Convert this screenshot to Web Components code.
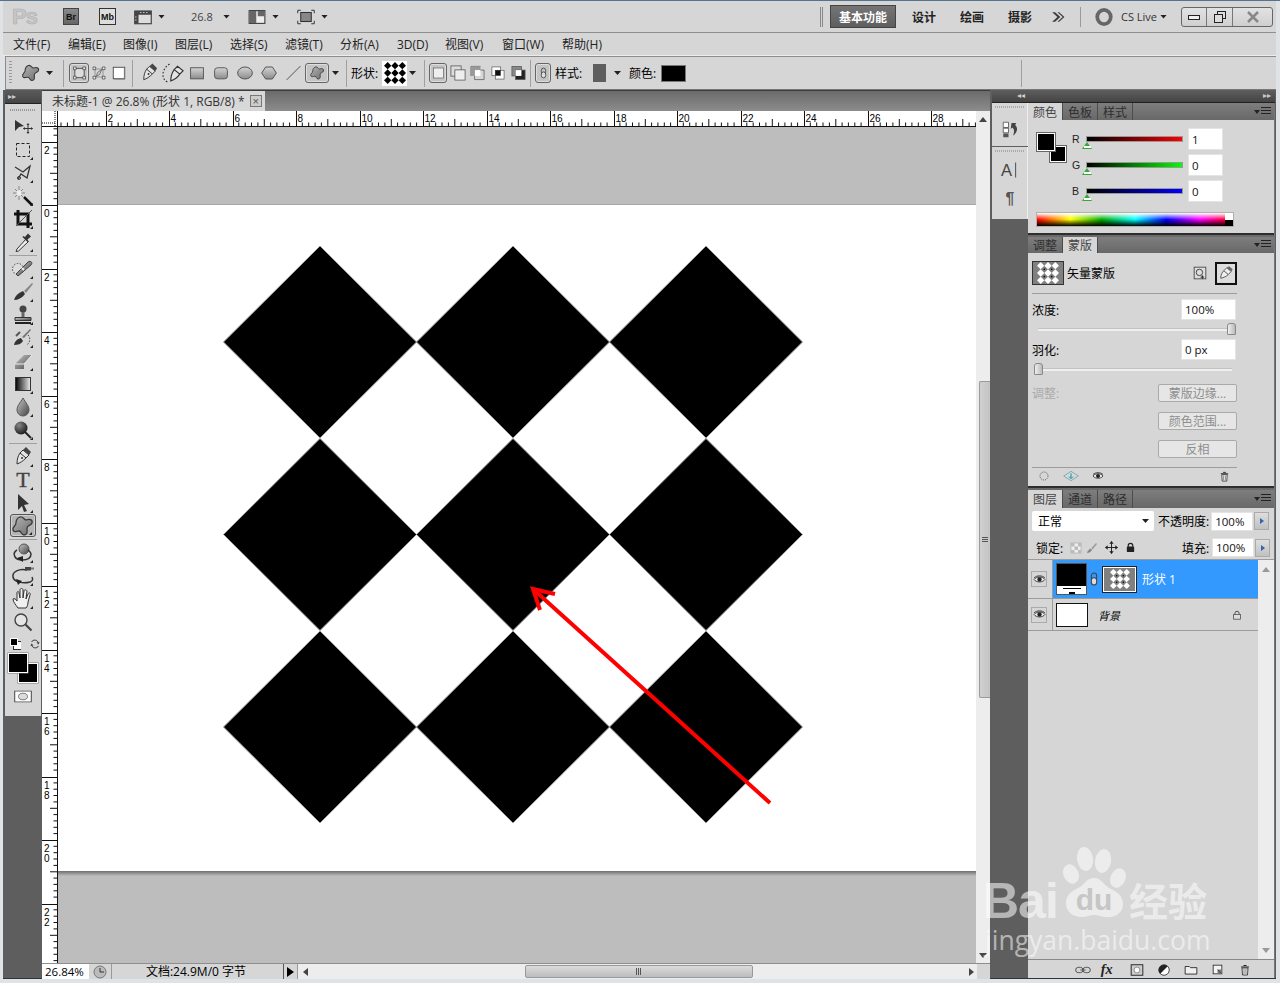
<!DOCTYPE html>
<html lang="zh-CN">
<head>
<meta charset="utf-8">
<title>Photoshop CS5</title>
<style>
html,body{margin:0;padding:0;width:1280px;height:983px;overflow:hidden;background:#d6d6d6}
body{font:12px "Open Sans","Noto Sans CJK SC",sans-serif;color:#000}
</style>
</head>
<body>
<ps-app></ps-app>
<script>
const FONT='"Open Sans","Noto Sans CJK SC",sans-serif';
const def=(name,css,html,hook)=>customElements.define(name,class extends HTMLElement{
  constructor(){super();this.attachShadow({mode:'open'});}
  connectedCallback(){
    if(this._d)return;this._d=1;
    const h=typeof html==='function'?html(this):html;
    this.shadowRoot.innerHTML=`<style>${css}</style>${h}`;
    if(hook)hook(this);
  }
});
const diamonds=(c,bg,dot)=>{let s=bg?`<rect width="24" height="24" fill="${bg}"/>`:'';
  for(const y of[4,12,20])for(const x of[4,12,20])s+=`<path d="M${x} ${y-4}l4 4-4 4-4-4z" fill="${c}"/>`;
  if(dot)for(const y of[8,16])for(const x of[8,16])s+=`<circle cx="${x}" cy="${y}" r=".9" fill="${dot}"/>`;return s};
const S='stroke="#333" fill="none"';
const ICONS={
 move:`<path d="M4 5l9 6-5 1-4 4z" fill="#333"/><path d="M17 9v9M12.500 13.500h9" stroke="#333"/><path d="M17 8l-1.500 2h3zM17 19l-1.500-2h3zM12 13.500l2-1.500v3zM22 13.500l-2-1.500v3z" fill="#333"/>`,
 marquee:`<rect x="5.500" y="5.500" width="13" height="13" fill="none" stroke="#222" stroke-dasharray="3 2"/>`,
 lasso:`<path d="M4 6l8 5 7-6-3 12-6-4-3 5" ${S} stroke-width="1.300"/><circle cx="8" cy="17" r="1.500" ${S}/>`,
 wand:`<path d="M13 13l8 8" stroke="#111" stroke-width="2.500"/><path d="M8 2v4M8 12v4M2 9h4M10 9h4M4 5l2 2M10 11l2 2M12 5l-2 2M4 13l2-2" stroke="#888"/><circle cx="8" cy="9" r="2.500" fill="#eee"/>`,
 crop:`<path d="M7 3v14h14M3 7h14v14" fill="none" stroke="#111" stroke-width="3"/><path d="M5 19L21 3" stroke="#555"/>`,
 dropper:`<path d="M6 19l9-10 2.500 2.500-10 9.500-2.500.5z" fill="#eee" stroke="#333"/><path d="M14 7l3-3.500 3 3-3.500 3 1 2-1 .5-5-5 .5-1z" fill="#333"/>`,
 heal:`<circle cx="7" cy="12" r="5.500" fill="#ddd" stroke="#444" stroke-dasharray="1.500 1.500"/><path d="M7 19l-2-2L17 5c3-2 5 1 3 3z" fill="url(#g)" stroke="#444"/><path d="M11 11l2 2" stroke="#eee" stroke-width="2"/>`,
 brush:`<path d="M3 20c1-4 4-7 9-9l2 3c-3 4-7 6-11 6z" fill="#333"/><path d="M13 11l8-8 1 1-7 9z" fill="#888"/>`,
 stamp:`<circle cx="12" cy="6" r="3.500" fill="#444"/><path d="M10.500 9h3v5h-3z" fill="#666"/><path d="M4 14.500h16v3H4z" fill="url(#g)" stroke="#333"/><path d="M4 19h16v2H4z" fill="#222"/>`,
 history:`<path d="M3 19c1-4 3-6 7-7l2 3c-2 3-5 4-9 4z" fill="#333"/><path d="M11 11l8-8 1 1-7 8z" fill="#777"/><path d="M17 9c3 3 2 7-1 10" fill="none" stroke="#444" stroke-dasharray="1.500 1.500"/><path d="M5 10l4-4" stroke="#555" stroke-width="2"/>`,
 eraser:`<path d="M4 15l9-9h8l-8 9v5H4z" fill="url(#g)"/><path d="M4 15h9l8-9" fill="none" stroke="#eee"/>`,
 gradient:`<defs><linearGradient id="gh"><stop offset="0" stop-color="#000"/><stop offset="1" stop-color="#eee"/></linearGradient></defs><rect x="4.500" y="5.500" width="15" height="13" fill="url(#gh)" stroke="#333"/>`,
 blur:`<path d="M12 3c3 5 6 8 6 12a6 6 0 01-12 0c0-4 3-7 6-12z" fill="url(#g)" stroke="#555"/>`,
 sponge:`<circle cx="10" cy="10" r="6.500" fill="url(#gd)"/><path d="M14 14l6 6" stroke="#222" stroke-width="2"/>`,
 pen:`<path d="M6 19c0-5 1-8 3-11l6 5c-3 3-6 5-9 6zM9 8l3-3 6 5-3 3" fill="#e4e4e4" stroke="#333"/><path d="M12 5l3-3 5 5-2 3z" fill="#444"/><circle cx="11" cy="13" r="1" fill="#333"/>`,
 penfree:`<path d="M10 19c0-4 1-7 3-10l5 4c-2 3-5 5-8 6zM13 9l3-3 5 4-3 3" fill="#e4e4e4" stroke="#333"/><path d="M7 20C1 17 2 8 9 4" fill="none" stroke="#333" stroke-dasharray="1.500 1.500"/>`,
 type:`<text x="12" y="19" text-anchor="middle" font-family="Liberation Serif" font-weight="400" font-size="22" stroke="#444" stroke-width=".4" fill="#444">T</text>`,
 direct:`<path d="M7 3l11 10-5 1 3 6-3 1-2-6-4 4z" fill="#333"/>`,
 blob:`<path d="M9 3c3-1 4 3 6 3 3-1 7-1 6 3-1 3-5 2-5 5s1 7-3 7c-3 0-2-4-5-4s-5 2-6-1c-1-3 3-4 3-7s1-5 4-6z" fill="url(#gb)" stroke="#3a3a3a" stroke-width="1.300"/>`,
 rot3d:`<circle cx="13" cy="8" r="5" fill="url(#g)" stroke="#555"/><path d="M6 9C1 12 3 19 11 19c5 0 9-2 9-6 0-2-2-3-3-4" fill="none" stroke="#333" stroke-width="1.500"/><path d="M6 17l6-2v6z" fill="#222"/>`,
 orbit3d:`<path d="M16 6C8 4 1 8 2 13c1 5 10 7 17 5 3-1 3-3 2-5" fill="none" stroke="#333" stroke-width="1.500"/><path d="M5 15l6 2-4 4z" fill="#222"/><rect x="14" y="3" width="6" height="3.500" fill="#444"/><rect x="20" y="3.500" width="3" height="2" fill="#777"/>`,
 hand:`<path d="M7 21c-2-3-5-6-5-9 1-1 3 0 4 2V6c0-2 2-2 2 0l1 5V3c0-2 3-2 3 0v8l1-7c0-2 3-1 3 0l-1 8 2-5c1-2 3-1 2 1l-2 7c0 3-1 5-2 6z" fill="#f0f0f0" stroke="#333"/>`,
 zoom:`<circle cx="10" cy="10" r="6" fill="#eee" fill-opacity=".6" stroke="#444" stroke-width="1.400"/><path d="M14.500 14.500l6 6" stroke="#444" stroke-width="2.200"/>`,
 rect:`<rect x="1" y="3" width="22" height="19" fill="url(#g2)" stroke="#555" stroke-width="1.600"/>`,
 round:`<rect x="1" y="3" width="22" height="19" rx="5" fill="url(#g2)" stroke="#555" stroke-width="1.600"/>`,
 ellipse:`<ellipse cx="12" cy="12" rx="11" ry="9" fill="url(#g2)" stroke="#555" stroke-width="1.500"/>`,
 polygon:`<path d="M7 3h10l6 9-6 9H7L1 12z" fill="url(#g2)" stroke="#555" stroke-width="1.500"/>`,
 line:`<path d="M1 23L23 1" stroke="#555" stroke-width="1.600"/>`,
 shapes:`<rect x="5" y="5" width="14" height="14" fill="#ddd" stroke="#444" stroke-width="1.300"/><path d="M3 3h4v4H3zM17 3h4v4h-4zM3 17h4v4H3zM17 17h4v4h-4z" fill="#eee" stroke="#333"/>`,
 paths:`<path d="M6 6h12v12H6z" fill="none" stroke="#777"/><path d="M3 3h4v4H3zM17 3h4v4h-4zM3 17h4v4H3zM17 17h4v4h-4z" fill="#eee" stroke="#333"/><path d="M8 17l2-6 6-4-3 7z" fill="none" stroke="#444"/>`,
 fillpx:`<rect x="3.500" y="3.500" width="17" height="17" fill="#fff" stroke="#444" stroke-width="1.300"/><path d="M20 4v17H5" fill="none" stroke="#777" stroke-width="1.500"/>`,
 add0:`<rect x="4" y="4" width="16" height="16" fill="#eee" stroke="#555"/>`,
 add1:`<rect x="3" y="3" width="13" height="13" fill="#ddd" stroke="#555"/><rect x="8" y="8" width="13" height="13" fill="#eee" stroke="#555"/>`,
 add2:`<path d="M3 16V3h13M8 8h13v13H8z" fill="none" stroke="#555"/><path d="M8 8h8v8H8z" fill="#fff"/><path d="M3 3h13v5H8v8H3z" fill="#999"/>`,
 add3:`<rect x="3" y="3" width="13" height="13" fill="#fff" stroke="#555"/><rect x="8" y="8" width="13" height="13" fill="#fff" stroke="#555"/><rect x="8" y="8" width="8" height="8" fill="#111"/>`,
 add4:`<rect x="3" y="3" width="13" height="13" fill="#888" stroke="#555"/><rect x="8" y="8" width="13" height="13" fill="#222" stroke="#555"/><rect x="8" y="8" width="8" height="8" fill="#fff"/>`,
 chain:`<rect x="8" y="3" width="8" height="11" rx="4" fill="none" stroke="#444" stroke-width="1.600"/><rect x="8" y="10" width="8" height="11" rx="4" fill="#ddd" stroke="#444" stroke-width="1.600"/>`,
 frame:`<rect x="1" y="4" width="22" height="17" fill="#ddd" stroke="#333" stroke-width="1.400"/><path d="M1 4h22v5H1zM1 4h5v17H1z" fill="#444"/><path d="M8 6h2M12 6h2M16 6h2M2.500 11v2M2.500 15v2" stroke="#eee"/>`,
 layout:`<rect x="1.500" y="3.500" width="21" height="17" fill="#eee" stroke="#333" stroke-width="1.400"/><path d="M2 4h9v16H2zM13 4h9v7h-9z" fill="#666"/>`,
 screen:`<path d="M1 7V3h4M19 3h4v4M1 17v4h4M23 17v4h-4" fill="none" stroke="#333" stroke-width="1.300"/><rect x="5" y="6" width="14" height="12" fill="#888" stroke="#333" stroke-width="1.400"/>`,
 ring:`<ellipse cx="12" cy="12" rx="9" ry="9.500" fill="none" stroke="#666" stroke-width="5"/>`,
 eye:`<path d="M2 12c4-6 16-6 20 0-4 6-16 6-20 0z" fill="#eee" stroke="#222" stroke-width="1.500"/><circle cx="12" cy="12" r="4" fill="#222"/><path d="M2 9c5-5 15-5 20 0" fill="none" stroke="#222" stroke-width="1.500"/>`,
 trash:`<path d="M6 8h12l-1 14H7z" fill="#eee" stroke="#222" stroke-width="1.600"/><path d="M4 6h16M9 3h6" stroke="#222" stroke-width="2"/><path d="M10 10v10M14 10v10" stroke="#222"/>`,
 dotted:`<circle cx="12" cy="12" r="8" fill="none" stroke="#333" stroke-width="1.500" stroke-dasharray="2 2"/>`,
 applydiamond:`<path d="M12 5l11 7-11 7L1 12z" fill="#c8e0d8" stroke="#789"/><path d="M12 8v7M9 13l3 3 3-3" stroke="#27a" fill="none" stroke-width="1.400"/>`,
 maskadd:`<rect x="2" y="2" width="20" height="20" fill="#ddd" stroke="#444" stroke-width="1.500"/><circle cx="11" cy="11" r="5.500" fill="none" stroke="#333" stroke-width="1.500"/><path d="M16 16v6M13 19h6" stroke="#111" stroke-width="1.500"/>`,
 link:`<rect x="1" y="8" width="11" height="8" rx="4" fill="none" stroke="#555" stroke-width="1.500"/><rect x="12" y="8" width="11" height="8" rx="4" fill="none" stroke="#555" stroke-width="1.500"/><path d="M8 12h8" stroke="#555" stroke-width="1.500"/>`,
 fx:`<text x="1" y="18" font-family="Liberation Serif" font-style="italic" font-weight="700" font-size="18" fill="#222">fx</text>`,
 mask:`<rect x="2" y="3" width="20" height="18" fill="#ccc" stroke="#222" stroke-width="1.600"/><circle cx="12" cy="12" r="5" fill="#fff" stroke="#555"/>`,
 adj:`<circle cx="12" cy="12" r="9" fill="#fff" stroke="#333" stroke-width="1.500"/><path d="M5.600 18.400A9 9 0 0118.400 5.600z" fill="#222"/>`,
 folder:`<path d="M2 6h7l2 2h11v11H2z" fill="#f0f0f0" stroke="#222" stroke-width="1.500"/>`,
 newlayer:`<rect x="4" y="4" width="16" height="16" fill="#f4f4f4" stroke="#222" stroke-width="1.500"/><path d="M12 12h8v8h-8z" fill="#777"/><path d="M12 12l8 8" stroke="#222"/>`,
 lockbig:`<path d="M7 11V8a5 5 0 0110 0v3" fill="none" stroke="#444" stroke-width="2.200"/><rect x="4" y="11" width="16" height="11" fill="#ddd" stroke="#333" stroke-width="1.600"/>`,
 locksolid:`<path d="M7 11V8a5 5 0 0110 0v3" fill="none" stroke="#222" stroke-width="2.500"/><rect x="4" y="10" width="16" height="12" rx="2" fill="#222"/>`,
 lockpx:`<rect x="2" y="2" width="20" height="20" fill="#eee" stroke="#999"/><path d="M2 2h7v7H2zM16 2h6v7h-6zM9 9h7v7H9zM2 16h7v6H2zM16 16h6v6h-6z" fill="#bbb"/>`,
 lockbrush:`<path d="M2 22c1-4 3-7 8-9l2 3c-2 4-6 6-10 6z" fill="#888"/><path d="M11 12l9-10 2 2-9 11z" fill="#999"/>`,
 lockmove:`<path d="M12 1v22M1 12h22" stroke="#222" stroke-width="1.800"/><path d="M12 0l-4 5h8zM12 24l-4-5h8zM0 12l5-4v8zM24 12l-5-4v8z" fill="#222"/>`,
 histpanel:`<path d="M3 3h7v7H3z" fill="#fff" stroke="#444"/><path d="M3 11h7v6H3z" fill="#fff" stroke="#444"/><path d="M3 18h7v5H3z" fill="#555"/><path d="M14 4h6l-1 3c4 3 3 10-3 14 2-5 2-9-1-11l-2 2z" fill="#444"/>`,
 charpanel:`<text x="0" y="20" font-family="Liberation Sans" font-size="22" fill="#444">A</text><path d="M19.500 2v20" stroke="#222"/>`,
 parapanel:`<text x="12" y="21" text-anchor="middle" font-family="Liberation Sans" font-weight="700" font-size="21" fill="#555">¶</text>`,
 swap:`<path d="M5 8c3-5 10-5 13 0" fill="none" stroke="#333" stroke-width="2"/><path d="M21 8l-6 1 4 4zM3 16l6-1-4-4z" fill="#333"/><path d="M19 16c-3 5-10 5-13 0" fill="none" stroke="#333" stroke-width="2"/>`,
 qmask:`<rect x="1" y="2" width="22" height="20" fill="#fff" stroke="#333" stroke-width="1.200"/><circle cx="12" cy="12" r="6" fill="#ddd" stroke="#444"/>`,
 pattern:diamonds('#000','#fff'),
 tmask:diamonds('#fff','#808080','#000'),
 penbox:`<rect width="24" height="24" fill="#ddd"/><path d="M5 19c0-5 2-8 4-10l6 5c-3 3-6 4-10 5zM9 9l4-4 6 5-4 4" fill="#eee" stroke="#333"/><path d="M13 5l3-2 5 4-2 3z" fill="#666"/>`,
 dbl:`<path d="M2 4l9 8-9 8h5l9-8-9-8zM11 4l9 8-9 8h3l9-8-9-8z" fill="#3c3c3c"/>`,
};
def('ps-icon',`:host{display:block;flex:none;line-height:0}svg{display:block;overflow:visible}`,el=>{
  const w=el.getAttribute('w')||24,h=el.getAttribute('h')||w,n=el.getAttribute('name');
  return `<svg width="${w}" height="${h}" viewBox="0 0 24 24" preserveAspectRatio="${el.hasAttribute('fit')?'none':'xMidYMid meet'}"><defs>
  <linearGradient id="g" x1="0" y1="0" x2="1" y2="1"><stop offset="0" stop-color="#c8c8c8"/><stop offset="1" stop-color="#444"/></linearGradient>
  <linearGradient id="gb" x1="0" y1="0" x2="1" y2="1"><stop offset="0" stop-color="#b4b4b4"/><stop offset="1" stop-color="#6c6c6c"/></linearGradient>
  <linearGradient id="g2" x1="0" y1="0" x2="0" y2="1"><stop offset="0" stop-color="#d4d4d4"/><stop offset="1" stop-color="#8c8c8c"/></linearGradient>
  <radialGradient id="gd" cx=".35" cy=".3" r=".8"><stop offset="0" stop-color="#888"/><stop offset="1" stop-color="#111"/></radialGradient>
  </defs>${ICONS[n]||''}</svg>`});
def('ps-drop',`:host{display:block;flex:none;width:7px;height:4px;background:#222;clip-path:polygon(0 0,100% 0,50% 100%)}`,'');

/* ---- app shell ---- */
def('ps-app',`:host{display:flex;flex-direction:column;width:1280px;height:983px;box-sizing:border-box;position:relative;
  background:#dfe3e6;border-top:1px solid #54738f;padding:0 4px 4px 3px;overflow:hidden;font:12px ${FONT}}`,
 `<ps-titlebar></ps-titlebar><ps-menubar>
  <ps-menu>文件(F)</ps-menu><ps-menu>编辑(E)</ps-menu><ps-menu>图像(I)</ps-menu><ps-menu>图层(L)</ps-menu><ps-menu>选择(S)</ps-menu><ps-menu>滤镜(T)</ps-menu><ps-menu>分析(A)</ps-menu><ps-menu>3D(D)</ps-menu><ps-menu>视图(V)</ps-menu><ps-menu>窗口(W)</ps-menu><ps-menu>帮助(H)</ps-menu>
  </ps-menubar><ps-options></ps-options>
  <ps-workspace><ps-toolbar></ps-toolbar><ps-document></ps-document><ps-right></ps-right></ps-workspace>
  <ps-watermark></ps-watermark>`);

def('ps-titlebar',`:host{display:flex;align-items:center;flex:none;height:31px;background:#d6d6d6;border-bottom:1px solid #8e8e8e;box-sizing:content-box;padding-right:3px}
 .ps{margin-left:9px;width:24px;font:700 22px "Liberation Sans";color:#c6c6c6;-webkit-text-stroke:.6px #aeaeae;letter-spacing:-1px}
 .br{margin-left:27px;width:16px;height:17px;background:linear-gradient(#8a8a8a,#666);border:1px solid #444;box-sizing:border-box;color:#111;font:700 9px "Liberation Sans";display:flex;align-items:center;justify-content:center}
 .mb{margin-left:20px;width:17px;height:17px;background:#ddd;border:1px solid #333;box-sizing:border-box;color:#111;font:700 9px "Liberation Sans";display:flex;align-items:center;justify-content:center}
 .z{margin-left:26px;width:22px;color:#444;font-size:11px}
 .w{font-weight:700;width:24px;font-size:12px;color:#222;white-space:nowrap}
 .act{margin-left:7px;width:66px;height:23px;background:linear-gradient(#757575,#5e5e5e);border:1px solid #444;box-sizing:border-box;color:#fff;font-weight:700;display:flex;align-items:center;justify-content:center}
 .grip{margin-left:auto;width:3px;height:20px;border:solid #888;border-width:0 1px;box-sizing:border-box}
 .div{margin-left:15px;width:1px;height:20px;background:#9a9a9a}
 .cs{margin-left:8px;width:37px;font-size:11px;color:#333;white-space:nowrap}
 .win{margin-left:14px;width:92px;height:20px;border:1px solid #666;border-radius:3px;box-sizing:border-box;display:flex;background:linear-gradient(#e2e2e2,#cfcfcf)}
 .win i{display:flex;align-items:center;justify-content:center;border-right:1px solid #777;font-style:normal}
 .win i:last-child{border:0;flex:1}`,
 `<div class="ps">Ps</div><div class="br">Br</div><div class="mb">Mb</div>
 <ps-icon name="frame" w="18" style="margin-left:18px"></ps-icon><ps-drop style="margin-left:6px"></ps-drop>
 <div class="z">26.8</div><ps-drop style="margin-left:10px"></ps-drop>
 <ps-icon name="layout" w="18" style="margin-left:18px"></ps-icon><ps-drop style="margin-left:6px"></ps-drop>
 <ps-icon name="screen" w="18" style="margin-left:18px"></ps-icon><ps-drop style="margin-left:6px"></ps-drop>
 <div class="grip"></div><div class="act">基本功能</div>
 <div class="w" style="margin-left:16px">设计</div><div class="w" style="margin-left:24px">绘画</div><div class="w" style="margin-left:24px">摄影</div>
 <ps-icon name="dbl" w="14" style="margin-left:19px"></ps-icon><div class="div"></div><ps-icon name="ring" w="18" style="margin-left:14px"></ps-icon><div class="cs">CS Live</div><ps-drop style="margin-left:2px"></ps-drop>
 <div class="win"><i style="width:24px"><svg width="12" height="8"><rect x=".5" y="2.500" width="11" height="4" fill="#eee" stroke="#222"/></svg></i><i style="width:25px"><svg width="12" height="12"><rect x="3.500" y=".5" width="8" height="7" fill="#ddd" stroke="#222"/><rect x=".5" y="3.500" width="8" height="8" fill="#ddd" stroke="#222"/></svg></i><i><svg width="14" height="12"><path d="M2 1l10 10M12 1L2 11" stroke="#888" stroke-width="2.500"/></svg></i></div>`);

def('ps-menubar',`:host{display:grid;flex:none;height:22px;align-items:center;background:#d6d6d6;padding-left:10px;border-bottom:1px solid #ededed;
 grid-template-columns:55px 55px 52px 55px 55px 55px 57px 48px 57px 60px auto}`,`<slot></slot>`);
def('ps-menu',`:host{display:block;white-space:nowrap;color:#222;font-size:12px}`,`<slot></slot>`);

const OPT=[
 ['grip',3],['i:blob',20,9],['d',0,5],['v',0,10],['a:shapes',20,5],['i:paths',16,2],['i:fillpx',12,6],['v',0,7],
 ['i:pen',17,8],['i:penfree',20,5],['i:rect',14,7],['i:round',14,10],['i:ellipse',16,9],['i:polygon',16,8],['i:line',15,9],
 ['a:blob',24,4],['d',0,3],['v',0,7],['t:形状:',29,4],['s',25,2],['d',0,2],['v',0,8],
 ['a:add0',18,4],['i:add1',14,4],['i:add2',13,6],['i:add3',12,8],['i:add4',13,8],['v',0,5],['a:chain',16,4],
 ['t:样式:',28,4],['g',13,10],['d',0,8],['t:颜色:',28,8],['c',25,4],['v',0,335]];
const BIG=new Set(['pen','penfree','add1','add2','add3','add4','fillpx']);
def('ps-options',`:host{display:flex;flex:none;align-items:center;height:34px;box-sizing:border-box;background:#d6d6d6;border:1px solid #8c8c8c;border-bottom-color:#777;border-right:0;margin-left:2px}
 .grip{width:3px;height:24px;background:repeating-linear-gradient(#9a9a9a 0 1px,transparent 1px 3px)}
 .v{width:1px;height:27px;background:#a0a0a0}
 .t{white-space:nowrap;font-size:12px}
 .a{height:20px;border:1px solid #666;border-radius:3px;box-sizing:border-box;background:#c4c4c4;display:flex;align-items:center;justify-content:center;box-shadow:inset 0 0 0 1px #ddd}
 .s{height:25px;background:#fff;display:flex;align-items:center;justify-content:center}
 .g{height:18px;background:#5e5e5e}
 .c{height:17px;background:#000;border:1px solid #777;box-sizing:border-box}`,
 ()=>OPT.map(([k,w,m])=>{const st=`margin-left:${m||3}px;width:${w}px`;
  if(k==='grip')return `<div class="grip" style="${st}"></div>`;
  if(k==='v')return `<div class="v" style="margin-left:${m}px"></div>`;
  if(k==='d')return `<ps-drop style="margin-left:${m}px"></ps-drop>`;
  if(k==='s')return `<div class="s" style="${st}"><ps-icon name="pattern" w="22"></ps-icon></div>`;
  if(k==='g')return `<div class="g" style="${st}"></div>`;
  if(k==='c')return `<div class="c" style="${st}"></div>`;
  if(k[0]==='t')return `<div class="t" style="${st}">${k.slice(2)}</div>`;
  if(k[0]==='a')return `<div class="a" style="${st}"><ps-icon name="${k.slice(2)}" w="${w-3}" h="16"></ps-icon></div>`;
  const n=k.slice(2);
  return `<ps-icon name="${n}" w="${w}" h="20" style="${st}${BIG.has(n)?';transform:scale(1.35)':''}"></ps-icon>`}).join(''));

def('ps-workspace',`:host{display:flex;flex:1;min-height:0;background:#5e5e5e;padding-left:2px;border-bottom:1px solid #333}`,`<slot></slot>`);

/* ---- tools ---- */
def('ps-tool',`:host{display:flex;flex:none;width:26px;height:23px;align-items:center;justify-content:center;box-sizing:border-box;position:relative;margin:0 auto}
 :host([active]){border:1px solid #555;border-radius:3px;background:#b4b4b4;box-shadow:inset 0 0 0 1px #d0d0d0}
 :host([fly])::after{content:"";position:absolute;right:3px;bottom:1px;border:solid transparent;border-width:0 0 3px 3px;border-bottom-color:#222}`,
 el=>`<ps-icon name="${el.getAttribute('name')}" w="24"></ps-icon>`);
const tool=(n,f=1,a=0)=>`<ps-tool name="${n}" ${f?'fly':''} ${a?'active':''}></ps-tool>`;
const sep=`<div class="sep"></div>`;
def('ps-toolbar',`:host{display:flex;flex-direction:column;flex:none;width:36px;height:626px;background:#d6d6d6;font-size:0}
 .hd{height:14px;background:linear-gradient(#5b5b5b,#454545);border-bottom:1px solid #222;box-sizing:border-box;color:#ccc;font:8px "DejaVu Sans";line-height:13px;padding-left:3px}
 .gr{height:11px;display:flex;align-items:center;justify-content:center}.gr i{width:26px;height:2px;background:repeating-linear-gradient(90deg,#999 0 1px,transparent 1px 2px)}
 .sep{flex:none;height:1px;margin:1.500px 4px;background:#a0a0a0}
 .mini{display:flex;height:22px;align-items:center;padding-left:5px;gap:8px;box-sizing:border-box}
 .sw{height:30px;position:relative;margin-top:-2px;flex:none}
 .fg,.bg{position:absolute;width:18px;height:18px;background:#000;border:1px solid #fff;box-shadow:0 0 0 .5px #777}
 .fg{left:3px;top:0;z-index:1}.bg{left:13px;top:10px}
 .q{display:flex;justify-content:center;margin-top:7px}`,
 `<div class="hd">▸▸</div><div class="gr"><i></i></div>`+
 ['move:0','marquee','lasso','wand','crop','dropper'].map(s=>{const[n,f]=s.split(':');return tool(n,f!=='0')}).join('')+sep+
 ['heal','brush','stamp','history','eraser','gradient','blur','sponge'].map(n=>tool(n)).join('')+sep+
 tool('pen')+tool('type')+tool('direct')+tool('blob',1,1)+sep+tool('rot3d')+tool('orbit3d')+tool('hand')+tool('zoom',0)+
 `<div class="mini"><svg width="12" height="12"><rect x="3.500" y="3.500" width="8" height="8" fill="#fff" stroke="#333"/><rect x=".5" y=".5" width="7" height="7" fill="#000" stroke="#fff"/></svg><ps-icon name="swap" w="12"></ps-icon></div>
 <div class="sw"><div class="bg"></div><div class="fg"></div></div>
 <div class="q"><ps-icon name="qmask" w="18" h="13" fit></ps-icon></div>`);

/* ---- document ---- */
const rulerH=()=>{let s='';const W=918;
 for(let i=-3;i<160;i++){const x=-16+i*6.35;if(x<0||x>W)continue;const m=((i%10)+10)%10;
  if(m===0)continue;const h=m===5?7:3.500;s+=`<line x1="${x.toFixed(1)}" x2="${x.toFixed(1)}" y1="${15-h}" y2="15" stroke="#111"/>`;}
 for(let n=1;n<=14;n++){const x=Math.round(-16+n*63.5)+.5;s+=`<line x1="${x}" x2="${x}" y1="0" y2="15" stroke="#111"/><text x="${x+1}" y="11">${n*2}</text>`;}
 return `<svg width="${W}" height="16" font-family="Liberation Sans" font-size="10" fill="#000"><rect width="${W}" height="16" fill="#fff"/>${s}<line x1="0" x2="${W}" y1="15.500" y2="15.500" stroke="#111"/></svg>`};
const rulerV=()=>{let s='';const H=836;
 for(let i=-20;i<160;i++){const y=78+i*6.35;if(y<0||y>H)continue;const m=((i%10)+10)%10;
  if(m===0)continue;const w=m===5?7:3.500;s+=`<line y1="${y.toFixed(1)}" y2="${y.toFixed(1)}" x1="${15-w}" x2="15" stroke="#111"/>`;}
 for(let n=-1;n<=11;n++){const y=Math.round(78+n*63.5)+.5;const v=String(Math.abs(n*2));
  s+=`<line y1="${y}" y2="${y}" x1="0" x2="15" stroke="#111"/>`+[...v].map((c,i)=>`<text x="2" y="${y+11+i*10}">${c}</text>`).join('');}
 return `<svg width="16" height="${H}" font-family="Liberation Sans" font-size="10" fill="#000"><rect width="16" height="${H}" fill="#fff"/>${s}<line y1="0" y2="${H}" x1="15.500" x2="15.500" stroke="#111"/></svg>`};
const art=()=>{let p='';for(const y of[342,534.5,727])for(const x of[320,513,706])p+=`<path d="M${x} ${y-96}L${x+96.500} ${y}L${x} ${y+96}L${x-96.500} ${y}Z"/>`;
 return `<svg width="918" height="836" viewBox="58 127 918 836"><defs><linearGradient id="sh" x1="0" y1="0" x2="0" y2="1"><stop offset="0" stop-color="#6e6e6e"/><stop offset="1" stop-color="#bdbdbd"/></linearGradient></defs>
 <rect x="58" y="127" width="918" height="836" fill="#bdbdbd"/><rect x="58" y="204" width="918" height="1" fill="#a8a8a8"/><rect x="58" y="205" width="918" height="666" fill="#fff"/><rect x="58" y="871" width="918" height="5" fill="url(#sh)"/>
 <g fill="#000" stroke="#9a9a9a">${p}</g>
 <g fill="none" stroke="#f00" stroke-width="4"><path d="M770 803L533 589"/><path d="M555 594L533 589L540 610"/></g></svg>`};
def('ps-document',`:host{display:grid;flex:none;width:948px;margin-left:1px;grid-template-columns:16px 918px 14px;grid-template-rows:21px 16px 836px 16px;font:12px ${FONT}}
 .tabs{grid-column:1/4;grid-row:1;background:linear-gradient(#6b6b6b,#8c8c8c);display:flex;border-top:1px solid #3c3c3c;box-sizing:border-box}
 .tab{width:223px;background:#d8d8d8;display:flex;align-items:center;padding-left:10px;box-sizing:border-box;color:#333;white-space:nowrap;font-size:12px;gap:5px}
 .x{width:12px;height:12px;border:1px solid #777;background:#ccc;flex:none;box-sizing:border-box;font:11px/10px "Liberation Sans";text-align:center;color:#555}
 .corner{grid-column:1;grid-row:2;background:#fff;border-right:1px solid #111;border-bottom:1px solid #111;box-sizing:border-box}
 .corner svg{display:block}
 .rt{grid-column:2;grid-row:2;line-height:0}.rl{grid-column:1;grid-row:3;line-height:0}.cv{grid-column:2;grid-row:3;line-height:0;overflow:hidden}
 .vs{grid-column:3;grid-row:2/4;background:#ededed;display:flex;flex-direction:column;align-items:center}
 .ar{flex:none;height:16px;display:flex;align-items:center;justify-content:center}
 .thumb{flex:none;margin-top:254px;margin-left:3px;width:11px;height:317px;box-sizing:border-box;border:1px solid #9a9a9a;border-right:0;border-radius:2px 0 0 2px;background:linear-gradient(90deg,#d0d0d0,#c4c4c4);display:flex;align-items:center;justify-content:center}
 .gv{width:6px;height:5px;background:repeating-linear-gradient(#555 0 1px,transparent 1px 2px)}
 .st{grid-column:1/4;grid-row:4;display:flex;background:#d6d6d6;align-items:stretch;border-top:1px solid #8e8e8e;box-sizing:border-box;height:16px;font-size:12px}
 .zf{width:47px;background:#fff;flex:none;line-height:15px;padding-left:3px;box-sizing:border-box;font-size:11.500px;white-space:nowrap}
 .ic{width:22px;flex:none;display:flex;align-items:center;justify-content:center;border-right:1px solid #9a9a9a}
 .doc{width:172px;flex:none;text-align:center;line-height:15px;border-right:1px solid #555;box-sizing:border-box;white-space:nowrap;padding-right:3px}
 .pl{width:14px;flex:none;display:flex;align-items:center;justify-content:center;border-right:1px solid #9a9a9a;box-sizing:border-box}
 .hs{width:679px;flex:none;background:#ededed;display:flex;align-items:center;position:relative}
 .hth{margin-left:227px;width:228px;height:13px;box-sizing:border-box;border:1px solid #999;border-radius:2px;background:linear-gradient(#dcdcdc,#bcbcbc);display:flex;align-items:center;justify-content:center}
 .gh{width:6px;height:7px;background:repeating-linear-gradient(90deg,#555 0 1px,transparent 1px 2px)}
 .tri-u{width:0;height:0;border:4px solid transparent;border-top:0;border-bottom:5px solid #444}
 .tri-d{width:0;height:0;border:4px solid transparent;border-bottom:0;border-top:5px solid #444}
 .tri-l{position:absolute;left:5px;width:0;height:0;border:4px solid transparent;border-left:0;border-right:5px solid #444}
 .tri-r{position:absolute;right:3px;width:0;height:0;border:4px solid transparent;border-right:0;border-left:5px solid #444}`,
 ()=>`<div class="tabs"><div class="tab">未标题-1 @ 26.8% (形状 1, RGB/8) *<span class="x">×</span></div></div>
 <div class="corner"><svg width="15" height="15"><path d="M0 12h13M13 0v15" stroke="#111" stroke-dasharray="1 1"/></svg></div>
 <div class="rt">${rulerH()}</div><div class="vs"><div class="ar"><div class="tri-u"></div></div><div class="thumb"><div class="gv"></div></div><div style="flex:1"></div><div class="ar"><div class="tri-d"></div></div></div>
 <div class="rl">${rulerV()}</div><div class="cv">${art()}</div>
 <div class="st"><div class="zf">26.84%</div><div class="ic"><svg width="14" height="14"><circle cx="7" cy="7" r="6" fill="#bbb" stroke="#777"/><path d="M7 3v4h4" stroke="#333" fill="none"/></svg></div>
 <div class="doc">文档:24.9M/0 字节</div><div class="pl"><div class="tri-r" style="position:static;border-left:7px solid #000;border-top-width:5px;border-bottom-width:5px"></div></div>
 <div class="hs"><div class="tri-l"></div><div class="hth"><div class="gh"></div></div><div class="tri-r"></div></div>
 <div style="flex:1;background:#d6d6d6"></div></div>`);

/* ---- right side ---- */
def('ps-tabs',`:host{display:flex;flex:none;background:linear-gradient(#7e7e7e,#686868);position:relative;font-size:12px}
 b{font-weight:400;width:35px;display:flex;align-items:center;justify-content:center;color:#2e2e2e;border-right:1px solid #4c4c4c;box-sizing:border-box;white-space:nowrap}
 b.on{background:#d6d6d6;color:#444}
 .m{position:absolute;right:3px;top:50%;margin-top:-5px;width:10px;height:9px;background:repeating-linear-gradient(#222 0 1px,transparent 1px 3px)}
 .d{position:absolute;right:14px;top:50%;margin-top:-2px;border:3px solid transparent;border-top:4px solid #222;border-bottom:0}`,
 el=>{const on=+el.getAttribute('on');return el.getAttribute('tabs').split(',').map((t,i)=>`<b class="${i===on?'on':''}">${t}</b>`).join('')+`<i class="d"></i><i class="m"></i>`});
def('ps-field',`:host{display:flex;align-items:center;flex:none;background:#fff;box-sizing:border-box;padding-left:3px;font:11.500px ${FONT};color:#111;border:1px solid #e4e4e4;white-space:nowrap}`,`<slot></slot>`);
def('ps-btn',`:host{display:flex;align-items:center;justify-content:center;flex:none;width:79px;height:18px;box-sizing:border-box;border:1px solid #aaa;border-radius:2px;background:#e6e6e6;color:#8e8e8e;font-size:12px;white-space:nowrap;margin-left:auto}`,`<slot></slot>`);
def('ps-slider',`:host{display:block;flex:none;height:3px;background:#eef0ee;border:1px solid #c2c2c2;border-width:1px 0 0;box-sizing:border-box;position:relative}
 i{position:absolute;top:-6px;width:9px;height:12px;background:linear-gradient(90deg,#eee,#bbb);border:1px solid #888;border-radius:3px 3px 1px 1px;box-sizing:border-box}`,
 el=>`<i style="left:${el.getAttribute('at')}px"></i>`);
def('ps-colorrow',`:host{display:flex;align-items:center;flex:none;height:26px;font-size:11px}
 .l{width:14px;font:10.500px "Liberation Sans";color:#222}
 .b{width:97px;height:6px;position:relative;border:1px solid #999;box-sizing:border-box}
 .b i{position:absolute;left:-5px;top:5px;width:0;height:0;border:5px solid transparent;border-top:0;border-bottom:7px solid #3a3}
 .b u{position:absolute;left:-3px;top:9px;width:7px;height:2px;background:#fff}
 ps-field{margin-left:5px;width:35px;height:22px}`,
 el=>`<div class="l">${el.getAttribute('l')}</div><div class="b" style="background:linear-gradient(90deg,#000,${el.getAttribute('c')})"><i></i><u></u></div><ps-field>${el.getAttribute('v')}</ps-field>`);
def('ps-color',`:host{display:block;flex:none;height:113px;background:#d6d6d6;box-sizing:border-box;padding:6px 0 0 8px;position:relative}
 .top{display:flex}
 .sw{width:36px;height:36px;position:relative;flex:none}
 .f,.g{position:absolute;background:#000;box-sizing:border-box;border:1px solid #fff;box-shadow:0 0 0 1px #666}
 .f{left:1px;top:7px;width:18px;height:18px;z-index:1}.g{left:14px;top:20px;width:16px;height:16px}
 .spec{margin-top:8px;width:198px;height:15px;position:relative;border:1px solid #b0b0b0;box-sizing:border-box;
  background:linear-gradient(#fff,transparent 50%,#000),linear-gradient(90deg,#f00,#ff0 17%,#0a0 33%,#0ff 50%,#00f 66%,#f0f 83%,#f00)}
 .spec::after{content:"";position:absolute;right:0;top:0;bottom:0;width:8px;background:linear-gradient(#fff 50%,#000 50%)}`,
 `<div class="top"><div class="sw"><div class="g"></div><div class="f"></div></div><div>
 <ps-colorrow l="R" c="#f00" v="1"></ps-colorrow><ps-colorrow l="G" c="#0f0" v="0"></ps-colorrow><ps-colorrow l="B" c="#00f" v="0"></ps-colorrow></div></div><div class="spec"></div>`);
def('ps-masks',`:host{display:flex;flex-direction:column;flex:none;height:233px;background:#d6d6d6;box-sizing:border-box;padding:8px 37px 0 4px;font-size:12px}
 .h{display:flex;align-items:center;height:24px;flex:none}
 .th{width:32px;height:24px;background:#808080;border:1px solid #333;box-sizing:border-box;display:flex;align-items:center;justify-content:center}
 .hr{flex:none;height:1px;background:#9c9c9c}
 .r{display:flex;justify-content:space-between;align-items:center;flex:none}
 ps-field{width:55px;height:21px;margin-right:1px}
 ps-slider{margin-left:6px;width:194px}
 .sl{height:19px;display:flex;align-items:center;flex:none}
 .dis{color:#aaa}
 .pb{width:22px;height:23px;border:2px solid #111;box-sizing:border-box;margin-left:8px}
 .ft{display:flex;align-items:center;height:16px;flex:none}`,
 `<div class="h"><div class="th"><ps-icon name="tmask" w="22"></ps-icon></div><span style="margin-left:3px">矢量蒙版</span><ps-icon name="maskadd" w="14" style="margin-left:auto"></ps-icon><div class="pb"><ps-icon name="penbox" w="18"></ps-icon></div></div>
 <div class="hr" style="margin-top:8px"></div>
 <div class="r" style="margin-top:5px"><span>浓度:</span><ps-field>100%</ps-field></div>
 <div class="sl"><ps-slider at="189"></ps-slider></div>
 <div class="r"><span>羽化:</span><ps-field>0 px</ps-field></div>
 <div class="sl"><ps-slider at="-4"></ps-slider></div>
 <div class="r" style="margin-top:5px"><span class="dis">调整:</span><ps-btn>蒙版边缘...</ps-btn></div>
 <div class="r" style="margin-top:10px"><ps-btn>颜色范围...</ps-btn></div>
 <div class="r" style="margin-top:10px"><ps-btn>反相</ps-btn></div>
 <div class="hr" style="margin-top:9px"></div>
 <div class="ft"><ps-icon name="dotted" w="12" style="margin-left:6px"></ps-icon><ps-icon name="applydiamond" w="16" style="margin-left:13px"></ps-icon><ps-icon name="eye" w="12" style="margin-left:13px"></ps-icon><ps-icon name="trash" w="11" style="margin-left:auto;margin-right:7px"></ps-icon></div>`);
def('ps-layer',`:host{display:flex;flex:none;align-items:stretch;border-bottom:1px solid #9c9c9c;box-sizing:border-box;font-size:12px}
 .e{width:25px;flex:none;border-right:1px solid #9c9c9c;display:flex;align-items:center;justify-content:center;box-sizing:border-box}
 .e div{width:16px;height:16px;border:1px solid #aaa;box-sizing:border-box;display:flex;align-items:center;justify-content:center;margin-left:-2px}
 .c{flex:1;display:flex;align-items:center;padding-left:3px}
 :host([sel]) .c{background:#39f;color:#fff}`,
 el=>`<div class="e"><div><ps-icon name="eye" w="13"></ps-icon></div></div><div class="c"><slot></slot></div>`);
def('ps-layers',`:host{display:flex;flex-direction:column;flex:1;min-height:0;background:#d6d6d6;font-size:12px}
 .r{display:flex;align-items:center;flex:none;padding-left:4px;white-space:nowrap}
 .sel{width:122px;height:20px;background:#fff;border-radius:2px;display:flex;align-items:center;justify-content:space-between;padding:0 5px 0 6px;box-sizing:border-box;margin-right:4px;flex:none}
 ps-field{width:42px;height:19px;margin-left:2px;font-size:11.500px}
 .st{width:15px;height:18px;background:linear-gradient(#dedede,#c0c0c0);border:1px solid #aaa;box-sizing:border-box;margin-left:1px;display:flex;align-items:center;justify-content:center}
 .st i{border:3px solid transparent;border-left:4px solid #36a;border-right:0}
 .m{flex:1;display:flex;min-height:0;border-top:1px solid #9c9c9c;margin-top:2px}
 .list{flex:none;width:230px;display:flex;flex-direction:column}
 .sb{flex:1;background:#ededed;display:flex;flex-direction:column;justify-content:space-between;align-items:center;padding:7px 0 6px;border-left:0}
 .sb i{border:4px solid transparent}
 .t1{width:31px;height:32px;background:linear-gradient(#000 75%,#fff 75%);border:1px solid #555;box-sizing:border-box;flex:none;display:flex;align-items:flex-end;justify-content:center}
 .t1 i{width:18px;height:5px;border-top:1px solid #000;background:linear-gradient(#000,#000) center bottom/6px 2px no-repeat}
 .t2{width:35px;height:27px;background:#808080;border:2px solid #fff;outline:1px solid #222;outline-offset:-1px;box-sizing:border-box;display:flex;align-items:center;justify-content:center;flex:none;margin-left:4px}
 .t3{width:32px;height:24px;background:#fff;border:1px solid #111;box-sizing:border-box;flex:none}
 .bot{flex:none;height:18px;border-top:1px solid #888;display:grid;grid-auto-flow:column;grid-auto-columns:27px;justify-content:end;align-items:center;justify-items:center;padding-right:16px}`,
 `<div class="r" style="margin-top:3px"><div class="sel"><span>正常</span><ps-drop></ps-drop></div><span>不透明度:</span><ps-field>100%</ps-field><div class="st"><i></i></div></div>
 <div class="r" style="margin-top:7px"><span style="margin-left:4px;width:34px">锁定:</span><ps-icon name="lockpx" w="12"></ps-icon><ps-icon name="lockbrush" w="12" style="margin-left:4px"></ps-icon><ps-icon name="lockmove" w="13" style="margin-left:7px"></ps-icon><ps-icon name="locksolid" w="11" style="margin-left:7px"></ps-icon><span style="margin-left:46px;width:28px">填充:</span><ps-field>100%</ps-field><div class="st"><i></i></div></div>
 <div class="m"><div class="list">
  <ps-layer sel style="height:39px"><div class="t1"><i></i></div><ps-icon name="chain" w="16" style="margin-left:-1px"></ps-icon><div class="t2" style="margin-left:0"><ps-icon name="tmask" w="20"></ps-icon></div><span style="margin-left:5px;color:#fff">形状 1</span></ps-layer>
  <ps-layer style="height:32px"><div class="t3"></div><i style="margin-left:10px;font-size:11px">背景</i><ps-icon name="lockbig" w="10" style="margin-left:auto;margin-right:16px"></ps-icon></ps-layer>
 </div><div class="sb"><i style="border-top:0;border-bottom:5px solid #999"></i><i style="border-bottom:0;border-top:5px solid #999"></i></div></div>
 <div class="bot"><ps-icon name="link" w="16"></ps-icon><ps-icon name="fx" w="19"></ps-icon><ps-icon name="mask" w="14"></ps-icon><ps-icon name="adj" w="14"></ps-icon><ps-icon name="folder" w="14"></ps-icon><ps-icon name="newlayer" w="13"></ps-icon><ps-icon name="trash" w="12"></ps-icon></div>`);
def('ps-dock',`:host{display:flex;flex-direction:column;flex:none;width:36px;gap:1px}
 section{background:#d6d6d6;display:flex;flex-direction:column;align-items:center;flex:none;box-sizing:border-box;padding-top:8px;gap:9px;border-right:1px solid #eee;position:relative}
 section::before{content:"";position:absolute;top:3px;left:3px;right:3px;height:2px;background:repeating-linear-gradient(90deg,#aaa 0 1px,transparent 1px 2px)}`,
 `<section style="height:43px;margin-top:0;justify-content:center"><ps-icon name="histpanel" w="18"></ps-icon></section>
 <section style="height:72px;padding-top:14px;gap:9px"><ps-icon name="charpanel" w="18"></ps-icon><ps-icon name="parapanel" w="18"></ps-icon></section>`);
def('ps-right',`:host{display:grid;flex:none;width:283px;margin-left:2px;grid-template-columns:36px 247px;grid-template-rows:13px 1fr;font:12px ${FONT}}
 .hd{grid-column:1/3;background:linear-gradient(#5e5e5e,#444);border-bottom:1px solid #222;box-sizing:border-box;display:flex;justify-content:space-between;color:#ccc;font:8px/12px "DejaVu Sans";padding:0 4px 0 25px}
 .p{display:flex;flex-direction:column;border-right:1px solid #777;box-sizing:border-box;min-height:0}
 .gap{flex:none;height:4px;background:linear-gradient(#2e2e2e 50%,#6a6a6a 50%)}`,
 `<div class="hd"><span>◂◂</span><span>▸▸</span></div><ps-dock></ps-dock>
 <div class="p"><ps-tabs tabs="颜色,色板,样式" on="0" style="height:17px"></ps-tabs><ps-color></ps-color><div class="gap"></div>
 <ps-tabs tabs="调整,蒙版" on="1" style="height:16px"></ps-tabs><ps-masks></ps-masks><div class="gap"></div>
 <ps-tabs tabs="图层,通道,路径" on="0" style="height:18px"></ps-tabs><ps-layers></ps-layers></div>`);

/* ---- watermark ---- */
def('ps-watermark',`:host{position:absolute;left:0;top:0;width:1280px;height:983px;pointer-events:none;display:block;color:rgba(255,255,255,.55)}
 div{position:absolute;white-space:nowrap;line-height:1}
 .bai{left:983px;top:871px;font:700 50px "Liberation Sans";letter-spacing:-1px}
 .jy{left:985px;top:921px;font:400 26.500px "Open Sans"}
 .cn{left:1129px;top:876px;font:700 39px "Noto Sans CJK SC";line-height:44px;letter-spacing:0}
 svg{position:absolute;left:1060px;top:843px}`,
 `<div class="bai">Bai</div><svg width="70" height="78" viewBox="0 0 70 78"><g fill="rgba(255,255,255,.55)"><ellipse cx="25" cy="15" rx="8" ry="12" transform="rotate(-8 25 15)"/><ellipse cx="43" cy="17" rx="8" ry="12" transform="rotate(10 43 17)"/><ellipse cx="11" cy="30" rx="7.500" ry="10" transform="rotate(-25 11 30)"/><ellipse cx="58" cy="34" rx="7.500" ry="10" transform="rotate(25 58 34)"/><path d="M34 34c8 0 10 8 17 11 7 3 12 8 12 15 0 9-8 14-17 13-5 0-8-2-12-2s-7 2-12 2C13 73 6 68 6 59c0-7 5-12 12-15 7-3 8-10 16-10z"/></g><text x="34" y="66" text-anchor="middle" font-family="Liberation Sans" font-size="30" font-weight="700" fill="#c6c6c6">du</text></svg><div class="cn">经验</div><div class="jy">jingyan.baidu.com</div>`);
</script>
</body>
</html>
